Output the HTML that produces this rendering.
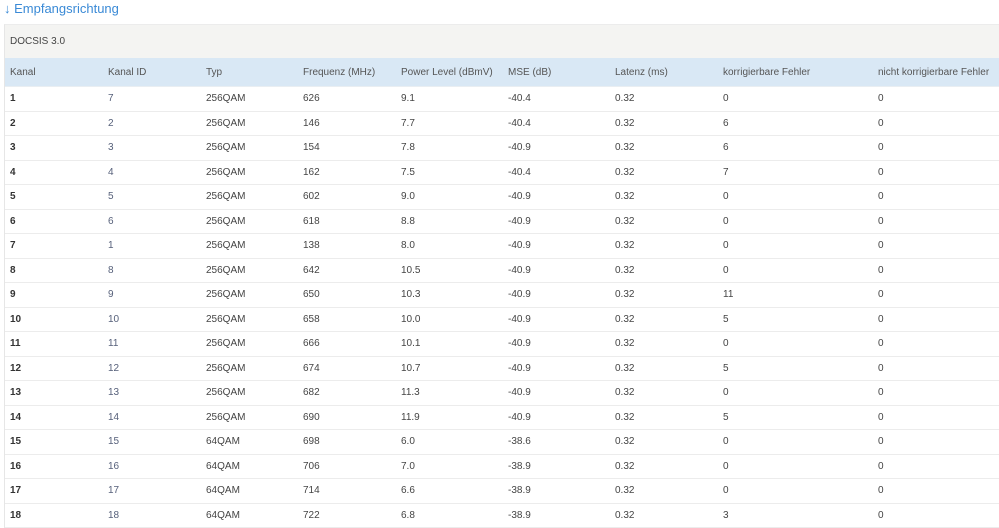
<!DOCTYPE html>
<html><head><meta charset="utf-8"><style>
body{margin:0;background:#fff;font-family:"Liberation Sans",sans-serif;width:999px;height:525px;overflow:hidden;position:relative}
.title{position:absolute;left:4px;top:1px;font-size:13px;color:#3a8ad6;line-height:16px}
.box{position:absolute;left:4px;top:24px;width:994px;border-left:1px solid #e6e6e6;border-top:1px solid #ececec}
.cap{height:33px;background:#f4f4f2;font-size:10px;color:#444;line-height:33px;padding-left:5px}
table{border-collapse:collapse;width:994px;table-layout:fixed;font-size:10px;color:#444}
td,th{padding:0 0 0 5px;text-align:left;font-weight:normal;white-space:nowrap}
th{background:#d9e8f5;height:28px;color:#555;border-bottom:1px solid #e9eef2}
td{height:23.5px;border-bottom:1px solid #ececec}
td:first-child{font-weight:bold;color:#333}
td:nth-child(2){color:#56607a}
</style></head><body>
<div class="title">↓ Empfangsrichtung</div>
<div class="box">
<div class="cap">DOCSIS 3.0</div>
<table>
<colgroup><col style="width:98px"><col style="width:98px"><col style="width:97px"><col style="width:98px"><col style="width:107px"><col style="width:107px"><col style="width:108px"><col style="width:155px"><col></colgroup>
<tr><th>Kanal</th><th>Kanal ID</th><th>Typ</th><th>Frequenz (MHz)</th><th>Power Level (dBmV)</th><th>MSE (dB)</th><th>Latenz (ms)</th><th>korrigierbare Fehler</th><th>nicht korrigierbare Fehler</th></tr>
<tr><td>1</td><td>7</td><td>256QAM</td><td>626</td><td>9.1</td><td>-40.4</td><td>0.32</td><td>0</td><td>0</td></tr>
<tr><td>2</td><td>2</td><td>256QAM</td><td>146</td><td>7.7</td><td>-40.4</td><td>0.32</td><td>6</td><td>0</td></tr>
<tr><td>3</td><td>3</td><td>256QAM</td><td>154</td><td>7.8</td><td>-40.9</td><td>0.32</td><td>6</td><td>0</td></tr>
<tr><td>4</td><td>4</td><td>256QAM</td><td>162</td><td>7.5</td><td>-40.4</td><td>0.32</td><td>7</td><td>0</td></tr>
<tr><td>5</td><td>5</td><td>256QAM</td><td>602</td><td>9.0</td><td>-40.9</td><td>0.32</td><td>0</td><td>0</td></tr>
<tr><td>6</td><td>6</td><td>256QAM</td><td>618</td><td>8.8</td><td>-40.9</td><td>0.32</td><td>0</td><td>0</td></tr>
<tr><td>7</td><td>1</td><td>256QAM</td><td>138</td><td>8.0</td><td>-40.9</td><td>0.32</td><td>0</td><td>0</td></tr>
<tr><td>8</td><td>8</td><td>256QAM</td><td>642</td><td>10.5</td><td>-40.9</td><td>0.32</td><td>0</td><td>0</td></tr>
<tr><td>9</td><td>9</td><td>256QAM</td><td>650</td><td>10.3</td><td>-40.9</td><td>0.32</td><td>11</td><td>0</td></tr>
<tr><td>10</td><td>10</td><td>256QAM</td><td>658</td><td>10.0</td><td>-40.9</td><td>0.32</td><td>5</td><td>0</td></tr>
<tr><td>11</td><td>11</td><td>256QAM</td><td>666</td><td>10.1</td><td>-40.9</td><td>0.32</td><td>0</td><td>0</td></tr>
<tr><td>12</td><td>12</td><td>256QAM</td><td>674</td><td>10.7</td><td>-40.9</td><td>0.32</td><td>5</td><td>0</td></tr>
<tr><td>13</td><td>13</td><td>256QAM</td><td>682</td><td>11.3</td><td>-40.9</td><td>0.32</td><td>0</td><td>0</td></tr>
<tr><td>14</td><td>14</td><td>256QAM</td><td>690</td><td>11.9</td><td>-40.9</td><td>0.32</td><td>5</td><td>0</td></tr>
<tr><td>15</td><td>15</td><td>64QAM</td><td>698</td><td>6.0</td><td>-38.6</td><td>0.32</td><td>0</td><td>0</td></tr>
<tr><td>16</td><td>16</td><td>64QAM</td><td>706</td><td>7.0</td><td>-38.9</td><td>0.32</td><td>0</td><td>0</td></tr>
<tr><td>17</td><td>17</td><td>64QAM</td><td>714</td><td>6.6</td><td>-38.9</td><td>0.32</td><td>0</td><td>0</td></tr>
<tr><td>18</td><td>18</td><td>64QAM</td><td>722</td><td>6.8</td><td>-38.9</td><td>0.32</td><td>3</td><td>0</td></tr>
</table>
</div>
</body></html>
